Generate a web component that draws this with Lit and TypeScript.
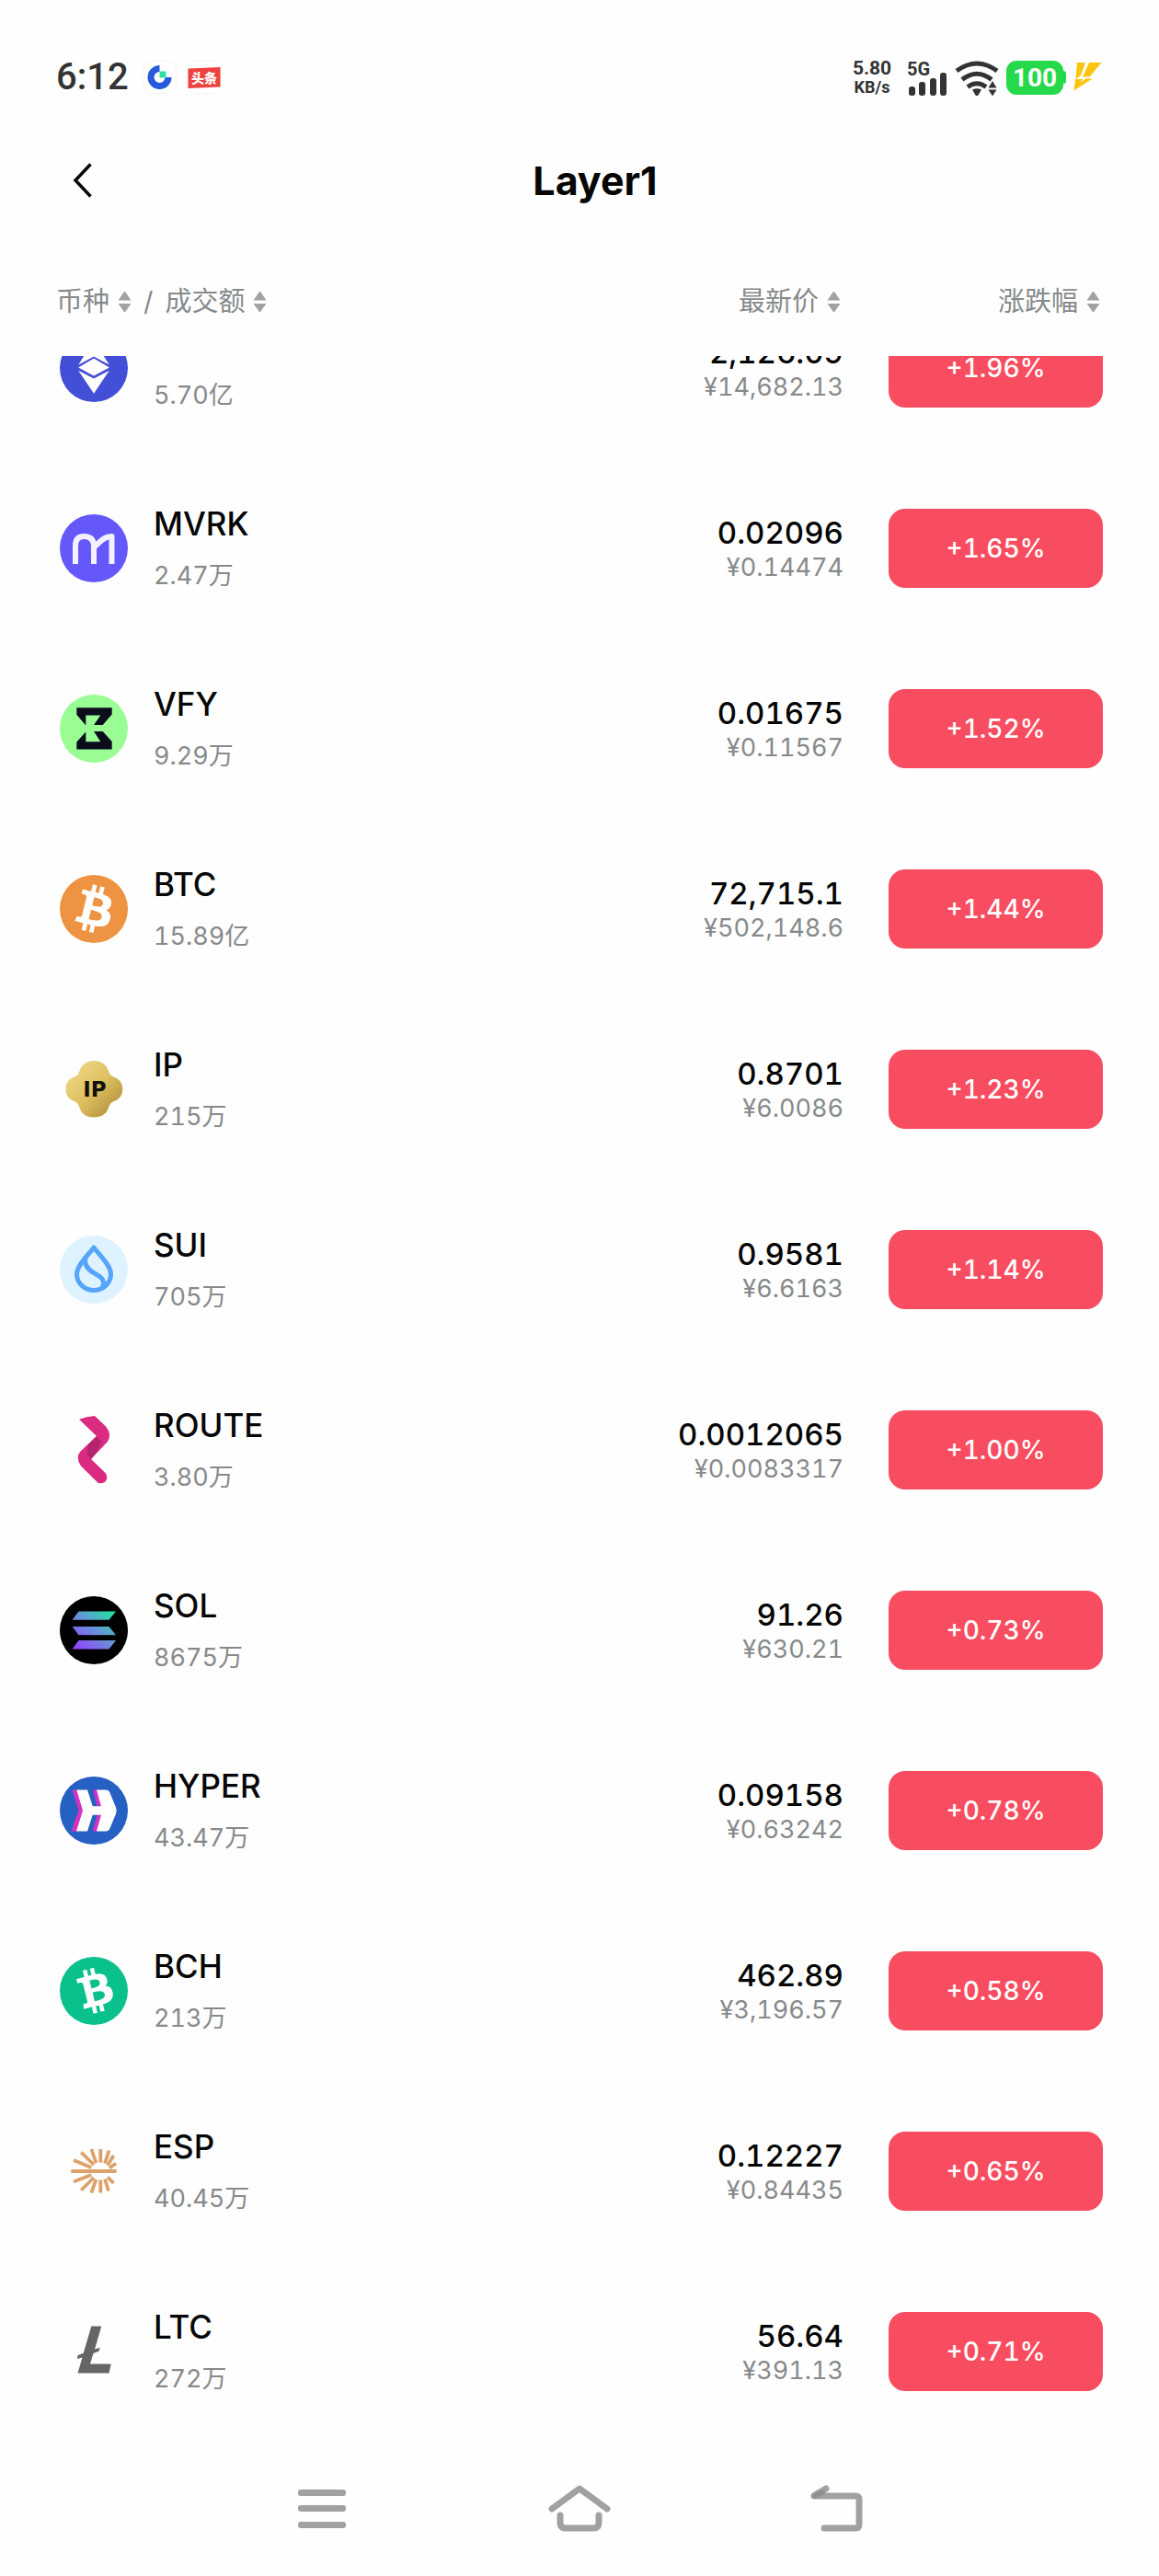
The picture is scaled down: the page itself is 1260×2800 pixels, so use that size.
import { LitElement, html, css, svg, type SVGTemplateResult } from "lit";
import { customElement, property } from "lit/decorators.js";

interface Coin {
  symbol: string;
  volume: string;
  price: string;
  cny: string;
  change: string;
}

const COINS: Coin[] = [
  { symbol: "ETH", volume: "5.70亿", price: "2,126.09", cny: "¥14,682.13", change: "+1.96%" },
  { symbol: "MVRK", volume: "2.47万", price: "0.02096", cny: "¥0.14474", change: "+1.65%" },
  { symbol: "VFY", volume: "9.29万", price: "0.01675", cny: "¥0.11567", change: "+1.52%" },
  { symbol: "BTC", volume: "15.89亿", price: "72,715.1", cny: "¥502,148.6", change: "+1.44%" },
  { symbol: "IP", volume: "215万", price: "0.8701", cny: "¥6.0086", change: "+1.23%" },
  { symbol: "SUI", volume: "705万", price: "0.9581", cny: "¥6.6163", change: "+1.14%" },
  { symbol: "ROUTE", volume: "3.80万", price: "0.0012065", cny: "¥0.0083317", change: "+1.00%" },
  { symbol: "SOL", volume: "8675万", price: "91.26", cny: "¥630.21", change: "+0.73%" },
  { symbol: "HYPER", volume: "43.47万", price: "0.09158", cny: "¥0.63242", change: "+0.78%" },
  { symbol: "BCH", volume: "213万", price: "462.89", cny: "¥3,196.57", change: "+0.58%" },
  { symbol: "ESP", volume: "40.45万", price: "0.12227", cny: "¥0.84435", change: "+0.65%" },
  { symbol: "LTC", volume: "272万", price: "56.64", cny: "¥391.13", change: "+0.71%" },
];

const disc = (fill: string) => svg`<circle cx="37" cy="37" r="37" fill=${fill}></circle>`;

// Bitcoin mark on a 32-unit grid, shared by BTC and BCH.
const bitcoinMark =
  "M23.189 14.02c.314-2.096-1.283-3.223-3.465-3.975l.708-2.84-1.728-.43-.69 2.765c-.454-.114-.92-.22-1.385-.326l.695-2.783L15.596 6l-.708 2.839c-.376-.086-.746-.17-1.104-.26l.002-.009-2.384-.595-.46 1.846s1.283.294 1.256.312c.7.175.826.638.805 1.006l-.806 3.235c.048.012.11.03.18.057l-.183-.045-1.13 4.532c-.086.212-.303.531-.793.41.018.025-1.256-.313-1.256-.313l-.858 1.978 2.25.561c.418.105.828.215 1.231.318l-.715 2.872 1.727.43.708-2.84c.472.127.93.245 1.378.357l-.706 2.828 1.728.43.715-2.866c2.948.558 5.164.333 6.097-2.333.752-2.146-.037-3.385-1.588-4.192 1.13-.26 1.98-1.003 2.207-2.538zm-3.95 5.538c-.533 2.147-4.148.986-5.32.695l.95-3.805c1.172.293 4.929.872 4.37 3.11zm.535-5.569c-.487 1.953-3.495.96-4.47.717l.86-3.45c.975.243 4.118.696 3.61 2.733z";

const hyperMark =
  "M18.3 14.6H30L35.7 32.3H45L40 14.6H50Q53 14.6 54.200 17L61 33.5Q62.3 37 61 40.5L54.200 57Q53 59.6 50 59.6H40L45 41.8H35.7L30 59.6H18L25 37Z";

const LOGOS: Record<string, SVGTemplateResult> = {
  ETH: svg`${disc("#434fd6")}
    <g fill="#fff">
      <path d="M37 7L53.8 33.5L37 24.5L20.2 33.5Z"></path>
      <path d="M37 26.5L53.8 36.5L37 45.5L20.2 36.5Z"></path>
      <path d="M20.2 39.7L37 48.5L53.8 39.7L37 64.7Z"></path>
    </g>`,
  MVRK: svg`${disc("#6558fb")}
    <path d="M17 54V34Q17 24 26.500 24Q37 24 37 35V54M37 36L44 29.500Q50 24 56.500 24V54" fill="none" stroke="#f3f1ff" stroke-width="6" stroke-linejoin="round"></path>`,
  VFY: svg`${disc("#99fd94")}
    <g fill="#0b0d1c">
      <path d="M18.3 14.3H56.7V21.4L46.7 32.9H37L44.3 22.6H28.3V33.6L18.3 21.8Z"></path>
      <path d="M28.3 40.4L18.3 51.500V59.6H56.7V51L46.7 40H37L44.3 51.3H28.3Z"></path>
    </g>`,
  BTC: svg`${disc("#ee9341")}
    <path transform="translate(36.500 36.500) scale(2.64) translate(-15.8 -15.9)" d=${bitcoinMark} fill="#fff"></path>`,
  IP: svg`
    <defs>
      <linearGradient id="gold" x1="0" y1="0" x2="1" y2="1">
        <stop offset="0.1" stop-color="#ecd683"></stop>
        <stop offset="0.5" stop-color="#dfc162"></stop>
        <stop offset="0.9" stop-color="#b2903a"></stop>
      </linearGradient>
    </defs>
    <path d="M37 6C45 6 51 10.500 53 17C54.500 21.500 56 22.500 60 24C65 26 68.300 31 68.300 37C68.300 43 65 47.500 60 49.500C56 51 54.500 52.500 53 57C51 63.500 45 67.500 37 67.500C29 67.500 23.500 63.500 21.500 57C20 52.500 18.500 51 14.500 49.500C9.500 47.500 6.500 43 6.500 37C6.500 31 9.500 26 14.500 24C18.500 22.500 20 21.500 21.500 17C23.500 10.500 29 6 37 6Z" fill="url(#gold)"></path>
    <text x="38" y="45" text-anchor="middle" font-family="DejaVu Sans, sans-serif" font-weight="700" font-size="23" fill="#12100a">IP</text>`,
  SUI: svg`${disc("#def2ff")}
    <g fill="none" stroke="#56a5fb" stroke-width="5" stroke-linejoin="round">
      <path d="M37 13C42 20 55.500 32 55.500 42A18.500 17.500 0 0 1 18.500 42C18.500 32 32 20 37 13Z"></path>
      <path d="M28 24C26 32 31 37.500 38.500 41.500C46 45.500 50 50 46 56.500"></path>
    </g>`,
  ROUTE: svg`
    <path d="M21 3.800Q29 .5 38 0L50 11.500Q57 20 52 28L34 47L50 62.500Q53 68 49 72Q46 73.500 42 73.300L23 54.500Q17 46 22 39L40 22Z" fill="#da2a82"></path>
    <path d="M40 22L45 28Q43 36 34 47L29.500 41.500L31 31Z" fill="#b3246d"></path>`,
  SOL: svg`
    <defs>
      <linearGradient id="sol" gradientUnits="userSpaceOnUse" x1="18" y1="60" x2="56" y2="14">
        <stop offset="0.05" stop-color="#9046fb"></stop>
        <stop offset="0.5" stop-color="#6c8ddb"></stop>
        <stop offset="1" stop-color="#1fe79c"></stop>
      </linearGradient>
    </defs>
    ${disc("#000")}
    <path d="M20.500 16.400H61L53.500 25.800H13.500ZM13.500 32.900H53.500L61 42.200H20.500ZM20.500 47.900H61L53.500 57.500H13.500Z" fill="url(#sol)"></path>`,
  HYPER: svg`${disc("#2560c2")}
    <path d="M13.500 14.600H19L26 37L19 59.600H12.500L20.500 37ZM36 14.600H41L46 32.300H40.800ZM40.800 41.800H46L41 59.600H35.500Z" fill="#d431c4"></path>
    <path d=${hyperMark} fill="#fff"></path>`,
  BCH: svg`${disc("#0ac18e")}
    <path transform="translate(37 36.500) rotate(-28) scale(2.500) translate(-15.800 -15.900)" d=${bitcoinMark} fill="#fff"></path>`,
  ESP: svg`
    <path d="M12.300 37H61.700M15 25L34.300 33M23.300 16.500L37 30M34.300 13L39.500 28M44.300 13V27.500M53.500 14.500L49 28.500M58.500 20L52 30.500M61 28.500L54 33.500M15 48.500L34.300 41M23.300 57.500L37 44M34.300 60.500L39.500 46M44.300 60.500V46.500M53 58.500L49 45.500M58.500 50L52 43.500" fill="none" stroke="#dca26a" stroke-width="3.800"></path>`,
  LTC: svg`
    <path d="M34.300 9.600H45.300L38 34.500L43.700 32.700L42.700 36.500L36.500 39L33 50.600H55.700L53.500 60.400H19.500L24.500 43.500L18.700 45L19.700 41L25.700 38.800Z" fill="#656565"></path>`,
};

@customElement("coin-logo")
export class CoinLogo extends LitElement {
  @property() symbol = "";

  static styles = css`
    :host { display: block; flex: none; }
    .logo { display: block; width: 74px; height: 74px; }
  `;

  render() {
    return html`<svg class="logo" viewBox="0 0 74 74" aria-hidden="true">${LOGOS[this.symbol]}</svg>`;
  }
}

@customElement("status-bar")
export class StatusBar extends LitElement {
  static styles = css`
    :host {
      display: flex;
      align-items: center;
      padding: 64px 61px 0 61px;
      height: 40px;
      font-family: Roboto, "Noto Sans CJK SC", sans-serif;
      color: #333;
    }
    .time { font-size: 40px; line-height: 40px; font-weight: 500; margin-right: 16px; }
    .app { width: 36px; height: 36px; margin-right: 12px; }
    .spacer { flex: 1; }
    .speed { text-align: center; font-weight: 700; width: 44px; margin-right: 16px; }
    .rate { display: block; font-size: 21px; line-height: 22px; }
    .unit { display: block; font-size: 18px; line-height: 20px; }
    .signal { width: 46px; height: 40px; margin-right: 6px; }
    .wifi { width: 48px; height: 40px; margin-right: 8px; }
    .battery { display: flex; align-items: center; margin-right: 8px; }
    .level {
      width: 62px;
      border-radius: 11px;
      background: #26d94a;
      color: #fff;
      font-size: 28px;
      line-height: 37px;
      font-weight: 700;
      text-align: center;
    }
    .nub { width: 3px; height: 14px; border-radius: 0 3px 3px 0; background: #26d94a; }
    .bolt { width: 32px; height: 32px; }
  `;

  render() {
    return html`
      <span class="time">6:12</span>
      <svg class="app" viewBox="0 0 36 36" aria-hidden="true">
        <rect x=".5" y=".5" width="35" height="35" rx="7" fill="#fff" stroke="#f4f4f4"></rect>
        <path d="M17.500 8.500A9.500 9.500 0 1 0 27 18" fill="none" stroke="#2859dc" stroke-width="7"></path>
        <path d="M17.500 11.500H24.500V18.500H17.500Z" fill="#2fe0a2"></path>
      </svg>
      <svg class="app" viewBox="0 0 36 36" aria-hidden="true">
        <rect x=".5" y=".5" width="35" height="35" rx="7" fill="#fff" stroke="#f4f4f4"></rect>
        <path d="M.5 8.500L35.500 7V28.500L.5 30Z" fill="#ee423f"></path>
        <text x="18" y="23.500" text-anchor="middle" font-size="14" font-weight="900" fill="#fff">头条</text>
      </svg>
      <span class="spacer"></span>
      <span class="speed"><span class="rate">5.80</span><span class="unit">KB/s</span></span>
      <svg class="signal" viewBox="0 0 46 40" aria-hidden="true" fill="#333">
        <text x="0" y="18" font-size="20" font-weight="700">5G</text>
        <rect x="2" y="30" width="7" height="10" rx="3"></rect>
        <rect x="13" y="25" width="7" height="15" rx="3"></rect>
        <rect x="25" y="21" width="7" height="19" rx="3"></rect>
        <rect x="36" y="15" width="7" height="25" rx="3"></rect>
      </svg>
      <svg class="wifi" viewBox="0 0 48 40" aria-hidden="true">
        <g fill="none" stroke="#333" stroke-width="5">
          <path d="M2 13Q24 -3 46 13"></path>
          <path d="M8 22.500Q24 10 40 22.500"></path>
          <path d="M14 30.500Q24 23 34 30.500"></path>
        </g>
        <path d="M19 33.500Q24 31 29 33.500L25.500 39.500Q24 41 22.500 39.500ZM41 24L45.500 31.500H36.500ZM41 40.500L36.500 33.500H45.500Z" fill="#333"></path>
      </svg>
      <span class="battery"><span class="level">100</span><span class="nub"></span></span>
      <svg class="bolt" viewBox="0 0 32 32" aria-hidden="true" fill="#fdc40e">
        <path d="M4 0H13L8 14L2.500 18ZM17 0H30.500L17.500 15.500H10ZM2 18H10.500L7 22L13.500 17.500H20.500L.5 30.500Z"></path>
      </svg>
    `;
  }
}

@customElement("sort-button")
export class SortButton extends LitElement {
  @property() label = "";

  static styles = css`
    :host { display: inline-flex; }
    .sort {
      display: inline-flex;
      align-items: center;
      gap: 9px;
      margin: 0;
      padding: 0;
      border: 0;
      background: none;
      color: inherit;
      font: inherit;
    }
    .arrows { display: block; width: 15px; height: 24px; }
  `;

  render() {
    return html`
      <button class="sort" type="button">
        ${this.label}
        <svg class="arrows" viewBox="0 0 15 24" aria-hidden="true">
          <path d="M6.500 1.500Q7.500 .5 8.500 1.500L14.500 10.500H.5ZM.5 14H14.500L8.500 22.500Q7.500 23.500 6.500 22.500Z" fill="#a0a3a4"></path>
        </svg>
      </button>
    `;
  }
}

@customElement("app-root")
export class AppRoot extends LitElement {
  static styles = css`
    :host {
      display: block;
      background: #fefefe;
      color: #060606;
      font-family: Inter, "Noto Sans CJK SC", sans-serif;
    }
    .titlebar {
      display: grid;
      grid-template-columns: 1fr auto 1fr;
      align-items: center;
      padding: 64px 30px 66px 64px;
    }
    .back {
      display: block;
      justify-self: start;
      padding: 8px 14px;
      border: 0;
      background: none;
    }
    .chevron { display: block; width: 24px; height: 40px; }
    .title { margin: 0; font-size: 43px; line-height: 56px; font-weight: 700; }
    .market, .head, .list { display: block; }
    .row {
      display: grid;
      grid-template-columns: minmax(0, 1fr) auto 233px;
      column-gap: 49px;
      align-items: center;
      padding: 0 61px 0 65px;
    }
    .labels { padding: 17px 64px 38px 61px; }
    .label {
      display: flex;
      align-items: center;
      padding: 0;
      font-size: 29px;
      line-height: 42px;
      font-weight: 400;
      color: #868a8b;
    }
    .label.end { justify-content: flex-end; }
    .slash { padding: 0 13px; }
    .list { overflow: hidden; }
    .coin { height: 196px; }
    /* The list is scrolled so that its first row is partly under the header. */
    .coin:first-child { margin-top: -85px; }
    .cell { display: block; padding: 0; }
    .asset { display: flex; align-items: center; gap: 28px; text-align: left; font-weight: 400; }
    .names { padding-top: 4px; font-variant-numeric: tabular-nums; }
    .prices { padding-top: 4px; text-align: right; font-variant-numeric: tabular-nums; }
    .primary { display: block; font-weight: 500; }
    .secondary { display: block; font-size: 27px; color: #868a8b; }
    .names .primary { font-size: 35px; line-height: 56px; }
    .names .secondary { line-height: 58px; }
    .prices .primary { font-size: 33px; line-height: 38px; }
    .prices .secondary { line-height: 38px; }
    .change {
      display: block;
      width: 100%;
      padding: 0;
      border: 0;
      border-radius: 18px;
      background: #f84d60;
      color: #fff;
      font-family: inherit;
      font-size: 28px;
      line-height: 86px;
      font-weight: 500;
      font-variant-numeric: tabular-nums;
      text-align: center;
    }
    .system {
      display: grid;
      grid-template-columns: repeat(3, 1fr);
      width: 840px;
      max-width: 100%;
      margin: 0 auto;
      padding: 33px 0;
    }
    .key { display: flex; justify-content: center; padding: 0; border: 0; background: none; }
    .glyph { display: block; width: 80px; height: 80px; }
  `;

  private renderCoin(coin: Coin) {
    return html`
      <tr class="row coin">
        <th class="cell asset" scope="row">
          <coin-logo .symbol=${coin.symbol}></coin-logo>
          <span class="names">
            <span class="primary">${coin.symbol}</span>
            <span class="secondary">${coin.volume}</span>
          </span>
        </th>
        <td class="cell prices">
          <span class="primary">${coin.price}</span>
          <span class="secondary">${coin.cny}</span>
        </td>
        <td class="cell"><button class="change" type="button">${coin.change}</button></td>
      </tr>
    `;
  }

  render() {
    return html`
      <status-bar></status-bar>
      <header class="titlebar">
        <button class="back" type="button" aria-label="返回">
          <svg class="chevron" viewBox="0 0 24 40" aria-hidden="true">
            <path d="M20.500 2.500L4 20L20.500 37.500" fill="none" stroke="#060606" stroke-width="3.500"></path>
          </svg>
        </button>
        <h1 class="title">Layer1</h1>
      </header>
      <table class="market">
        <thead class="head">
          <tr class="row labels">
            <th class="label" scope="col">
              <sort-button label="币种"></sort-button><span class="slash">/</span><sort-button label="成交额"></sort-button>
            </th>
            <th class="label end" scope="col"><sort-button label="最新价"></sort-button></th>
            <th class="label end" scope="col"><sort-button label="涨跌幅"></sort-button></th>
          </tr>
        </thead>
        <tbody class="list">${COINS.map((coin) => this.renderCoin(coin))}</tbody>
      </table>
      <nav class="system">
        <button class="key" type="button" aria-label="菜单">
          <svg class="glyph" viewBox="0 0 80 80" aria-hidden="true" fill="#a1a1a1">
            <rect x="14" y="19" width="52" height="7" rx="3"></rect>
            <rect x="14" y="36" width="52" height="7" rx="3"></rect>
            <rect x="14" y="54" width="52" height="7" rx="3"></rect>
          </svg>
        </button>
        <button class="key" type="button" aria-label="主页">
          <svg class="glyph" viewBox="0 0 80 80" aria-hidden="true" fill="none" stroke="#a1a1a1" stroke-width="7" stroke-linecap="round" stroke-linejoin="round">
            <path d="M10 40L40 18L70 40"></path>
            <path d="M19 47V55Q19 61 25 61H55Q61 61 61 55V47"></path>
          </svg>
        </button>
        <button class="key" type="button" aria-label="返回上一页">
          <svg class="glyph" viewBox="0 0 80 80" aria-hidden="true" fill="none" stroke="#a1a1a1" stroke-width="7" stroke-linecap="round" stroke-linejoin="round">
            <path d="M15 26H60Q64 26 64 30V57Q64 61 60 61H26"></path>
            <path d="M16 25L28 18"></path>
            <path d="M16 26L24 22" stroke="#8f8f8f" stroke-width="5"></path>
          </svg>
        </button>
      </nav>
    `;
  }
}
